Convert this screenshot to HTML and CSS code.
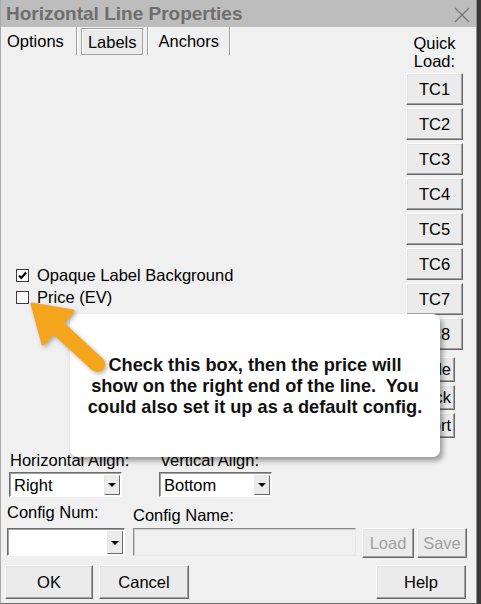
FILE: index.html
```html
<!DOCTYPE html>
<html lang="en">
<head>
  <meta charset="UTF-8" />
  <title>Horizontal Line Properties</title>
  <link rel="stylesheet" href="styles.css">
</head>
<body>

  <div class="dialog">

    <!-- === Title Bar === -->
    <div class="titlebar">
      <span class="title">Horizontal Line Properties</span>
      <svg class="close" width="16" height="16" viewBox="0 0 16 16">
        <path d="M1 1 L15 15 M15 1 L1 15" stroke="#767676" stroke-width="1.3" fill="none" />
      </svg>
    </div>

    <!-- === Tabs + Quick Load column === -->
    <div class="main">
      <div class="pane">
        <div class="tabs">
          <span class="tab first">Options</span>
          <span class="tab active">Labels</span>
          <span class="tab last">Anchors</span>
        </div>

        <div class="checks">
          <label class="check">
            <span class="box">
              <svg width="11" height="11" viewBox="0 0 11 11"><path d="M2 5.5 L4.3 8 L9 2.5" stroke="#000" stroke-width="2" fill="none" /></svg>
            </span>
            Opaque Label Background
          </label>
          <label class="check">
            <span class="box"></span>
            Price (EV)
          </label>
        </div>
      </div>

      <div class="quick">
        <div class="quick-label">Quick<br>Load:</div>
        <button class="btn tc">TC1</button>
        <button class="btn tc">TC2</button>
        <button class="btn tc">TC3</button>
        <button class="btn tc">TC4</button>
        <button class="btn tc">TC5</button>
        <button class="btn tc">TC6</button>
        <button class="btn tc">TC7</button>
        <button class="btn tc">TC8</button>
        <button class="btn small">Hide</button>
        <button class="btn small">Lock</button>
        <button class="btn small">Sort</button>
      </div>
    </div>

    <!-- === Alignment === -->
    <div class="align-row">
      <div class="field h-align">
        <div class="field-label">Horizontal Align:</div>
        <div class="combo"><span>Right</span><span class="drop"></span></div>
      </div>
      <div class="field v-align">
        <div class="field-label">Vertical Align:</div>
        <div class="combo"><span>Bottom</span><span class="drop"></span></div>
      </div>
    </div>

    <!-- === Config === -->
    <div class="config-row">
      <div class="field c-num">
        <div class="field-label">Config Num:</div>
        <div class="combo tall"><span></span><span class="drop"></span></div>
      </div>
      <div class="field c-name">
        <div class="field-label lower">Config Name:</div>
        <div class="textbox"></div>
      </div>
      <button class="btn disabled load">Load</button>
      <button class="btn disabled save">Save</button>
    </div>

    <!-- === Footer === -->
    <div class="footer">
      <button class="btn big ok">OK</button>
      <button class="btn big cancel">Cancel</button>
      <button class="btn big help">Help</button>
    </div>

    <!-- Annotation over the dialog -->
    <div class="callout">
      Check this box, then the price will<br>
      show on the right end of the line.&nbsp; You<br>
      could also set it up as a default config.
    </div>
    <svg class="pointer" width="100" height="90" viewBox="20 290 100 90">
      <line x1="57" y1="327" x2="97" y2="364" stroke="#f5a51c" stroke-width="16" stroke-linecap="round" />
      <polygon points="32,304 73,311 43,344" fill="#f5a51c" stroke="#f5a51c" stroke-width="3" stroke-linejoin="round" />
    </svg>

  </div>

</body>
</html>
```

FILE: styles.css
```css
/* Basic Resets */
* { margin: 0; padding: 0; box-sizing: border-box; font-family: "Liberation Sans", Arial, sans-serif; }
body { background-color: #3a3836; width: 481px; height: 604px; overflow: hidden; }

/* === Dialog frame === */
.dialog {
  position: relative;
  width: 477px;
  height: 604px;
  background: #f0f0f0;
  border-left: 1px solid #a9a9a9;
  border-right: 1px solid #8c8c8c;
  border-bottom: 1px solid #6a6a6a;
  display: flex;
  flex-direction: column;
  color: #000;
  font-size: 16.5px;
}

.titlebar {
  height: 27px;
  background: #bdbdbd;
  display: flex;
  align-items: center;
  justify-content: space-between;
  padding: 1px 6px 0 5px;
}
.title {
  font-size: 19px;
  font-weight: bold;
  color: #6e6e6e;
  line-height: 26px;
}
.close { margin-top: 2px; }

/* === Main area === */
.main {
  display: flex;
  height: 423px;
}
.pane {
  flex: 1;
  display: flex;
  flex-direction: column;
}

.tabs {
  display: flex;
  height: 28px;
}
.tab {
  line-height: 28px;
  white-space: nowrap;
}
.tab.first {
  padding: 0 12px 0 6px;
  border-right: 1px solid #a0a0a0;
  box-shadow: 1px 0 0 #fff;
}
.tab.active {
  margin: 1px 0 0 4px;
  height: 27px;
  line-height: 26px;
  padding: 0 5px 0 6px;
  border: 1px solid #a3a3a3;
  box-shadow: inset 1px 1px 0 #fff;
  background: #ebebeb;
}
.tab.last {
  margin-left: 4px;
  padding: 0 10px 0 11px;
  border-left: 1px solid #a0a0a0;
  border-right: 1px solid #a0a0a0;
  box-shadow: 1px 0 0 #fff, inset 1px 0 0 #fff;
}

.checks {
  margin-top: auto;
  padding: 0 0 142px 15px;
}
.check {
  display: flex;
  align-items: flex-start;
  height: 22px;
  line-height: 22px;
}
.box {
  width: 13px;
  height: 13px;
  margin: 5px 8px 0 0;
  background: #fff;
  border: 1px solid #3c3c3c;
  display: flex;
  align-items: center;
  justify-content: center;
}

/* Quick Load column */
.quick {
  width: 57px;
  margin-right: 13px;
  display: flex;
  flex-direction: column;
  align-items: flex-start;
}
.quick-label {
  width: 100%;
  padding-top: 7px;
  line-height: 18px;
  text-align: center;
  margin-bottom: 3px;
}

/* Win32 style push buttons */
.btn {
  background: #ebebeb;
  border: 1px solid;
  border-color: #fff #696969 #696969 #fff;
  box-shadow: inset -1px -1px 0 #a0a0a0, inset 1px 1px 0 #e3e3e3;
  font-size: 16.5px;
  color: #000;
  cursor: pointer;
}
.btn.tc {
  width: 57px;
  height: 32px;
  margin-bottom: 3px;
}
.btn.small {
  width: 49px;
  height: 25px;
  margin-top: 4px;
  margin-bottom: -1px;
  text-align: right;
  padding-right: 3px;
}
.btn.disabled { color: #a0a0a0; }

/* === Alignment / config rows === */
.field-label {
  line-height: 20px;
  white-space: nowrap;
}
.field-label.lower { padding-top: 3px; }

.align-row {
  display: flex;
  padding-left: 8px;
  gap: 37px;
}
.h-align, .v-align { width: 113px; }
.h-align .field-label, .v-align .field-label { padding-left: 1px; margin-bottom: 2px; }

.combo {
  height: 25px;
  background: #fff;
  border: 1px solid;
  border-color: #6d6d6d #fff #fff #6d6d6d;
  box-shadow: inset 1px 1px 0 #a0a0a0;
  display: flex;
  align-items: center;
  justify-content: space-between;
  padding: 0 1px 0 4px;
  line-height: 22px;
}
.combo.tall { height: 28px; }
.drop {
  width: 16px;
  height: calc(100% - 3px);
  margin-top: 1px;
  background: #ececec;
  border: 1px solid;
  border-color: #e8e8e8 #696969 #696969 #e8e8e8;
  display: flex;
  align-items: center;
  justify-content: center;
}
.drop::after {
  content: "";
  border-left: 4px solid transparent;
  border-right: 4px solid transparent;
  border-top: 4px solid #000;
}

.config-row {
  display: flex;
  align-items: flex-end;
  padding-left: 6px;
  margin-top: 5px;
}
.c-num { width: 118px; }
.c-num .field-label { margin-bottom: 6px; }
.c-name { width: 223px; margin-left: 8px; }
.c-name .field-label { margin-bottom: 3px; }
.textbox {
  height: 28px;
  background: #f0f0f0;
  border: 1px solid;
  border-color: #8a8a8a #e8e8e8 #e8e8e8 #8a8a8a;
  box-shadow: inset 1px 1px 0 #cfcfcf;
}
.btn.load { width: 52px; height: 30px; margin-left: 6px; margin-bottom: -2px; }
.btn.save { width: 50px; height: 30px; margin-left: 3px; margin-bottom: -2px; }

.footer {
  display: flex;
  gap: 6px;
  padding: 0 10px 0 4px;
  margin-top: 9px;
}
.btn.big { height: 34px; width: 88px; }
.btn.cancel { width: 90px; }
.btn.help { width: 90px; margin-left: auto; }

/* Annotation callout + arrow drawn over the dialog */
.callout {
  position: absolute;
  left: 69px;
  top: 314px;
  width: 370px;
  height: 143px;
  background: #fff;
  border-radius: 7px;
  box-shadow: 3px 4px 5px rgba(0, 0, 0, 0.35);
  padding-top: 41px;
  text-align: center;
  font-size: 18.2px;
  font-weight: bold;
  line-height: 21px;
  color: #111;
}
.pointer {
  position: absolute;
  left: 19px;
  top: 290px;
  filter: drop-shadow(2px 2px 2px rgba(0, 0, 0, 0.3));
}
```
